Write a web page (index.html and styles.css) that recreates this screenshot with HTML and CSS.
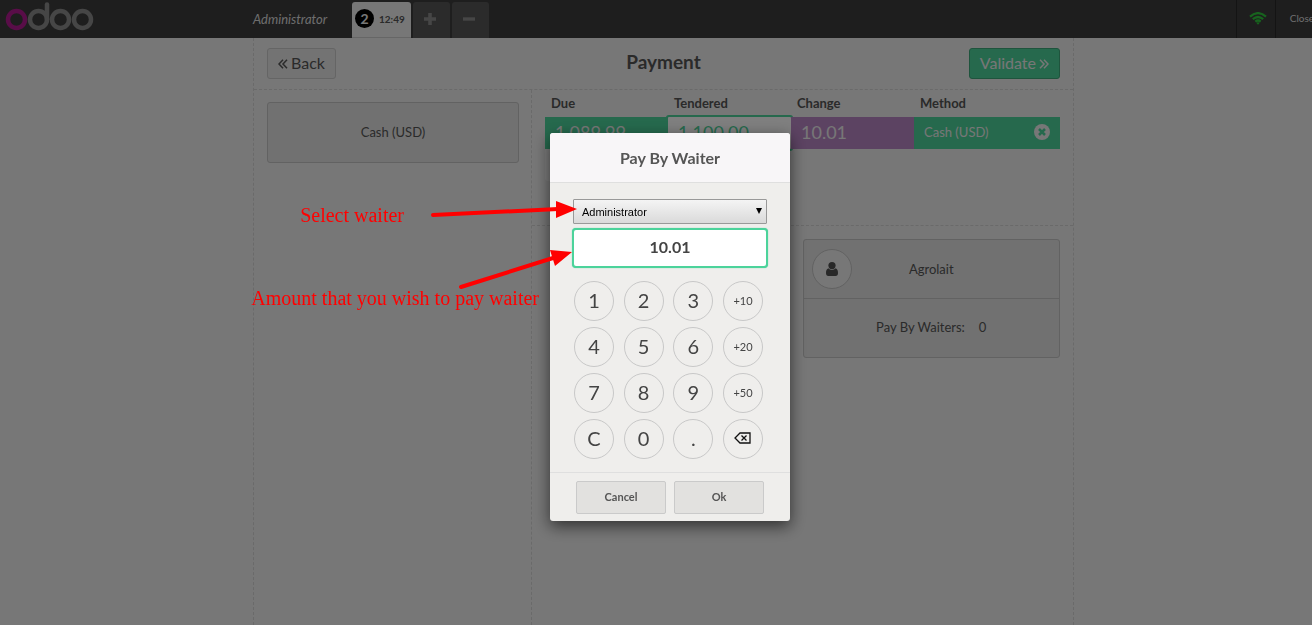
FILE: index.html
```
<!DOCTYPE html>
<html lang="en">
<head>
  <meta charset="UTF-8">
  <meta name="viewport" content="width=device-width, initial-scale=1.0">
  <title>Point of Sale</title>
  <link rel="stylesheet" href="styles.css">
</head>
<body>
  <div class="pos">
    <header class="topbar">
      <div class="logo">
        <svg width="90" height="32" viewBox="0 0 90 32" role="img" aria-label="odoo">
          <g fill="none" stroke-width="4.5">
            <circle cx="11.5" cy="19.5" r="8.5" stroke="#b31b91"/>
            <g stroke="#8c8c8c">
              <circle cx="33.5" cy="19.5" r="8.5"/>
              <path d="M42 19.5V4.5" stroke-linecap="round"/>
              <circle cx="55.5" cy="19.5" r="8.5"/>
              <circle cx="77.5" cy="19.5" r="8.5"/>
            </g>
          </g>
        </svg>
      </div>
      <div class="topbar-main">
        <span class="username">Administrator</span>
        <div class="orders">
          <button class="order selected"><span class="order-number">2</span>12:49</button>
          <button class="order square" aria-label="New order">
            <svg width="12" height="12" viewBox="0 0 12 12"><path d="M6 0v12M0 6h12" stroke="#8c8c8c" stroke-width="3.6"/></svg>
          </button>
          <button class="order square" aria-label="Delete order">
            <svg width="12" height="12" viewBox="0 0 12 12"><path d="M0 6h12" stroke="#8c8c8c" stroke-width="3.4"/></svg>
          </button>
        </div>
      </div>
      <div class="status">
        <span class="wifi">
          <svg width="18" height="13" viewBox="0 0 18 13" fill="none" stroke="#2fc63c" stroke-width="2.2">
            <path d="M1 4.6Q9-2.4 17 4.6M3.8 7.2Q9 2.8 14.2 7.2M6.3 9.6Q9 7.4 11.7 9.6"/>
            <path d="M7.2 10.8L9 12.8 10.8 10.8Q9 9.6 7.2 10.8z" fill="#2fc63c" stroke="none"/>
          </svg>
        </span>
        <button class="close">Close</button>
      </div>
    </header>

    <main class="screen">
      <div class="screen-top">
        <button class="nav">
          <svg width="10" height="10" viewBox="0 0 10 10"><path d="M5 .8L1 5l4 4.2M9 .8L5 5l4 4.2"/></svg>
          Back
        </button>
        <h1>Payment</h1>
        <button class="nav validate">
          Validate
          <svg width="10" height="10" viewBox="0 0 10 10"><path d="M1 .8L5 5 1 9.2M5 .8L9 5 5 9.2"/></svg>
        </button>
      </div>
      <div class="screen-body">
        <section class="methods">
          <button class="box method">Cash (USD)</button>
        </section>
        <section class="details">
          <div class="lines">
            <table>
              <thead>
                <tr><th>Due</th><th>Tendered</th><th>Change</th><th class="col-method">Method</th></tr>
              </thead>
              <tbody>
                <tr>
                  <td>1,089.99</td>
                  <td class="edit">1,100.00</td>
                  <td class="change">10.01</td>
                  <td class="col-method">
                    <div class="method-cell">
                      Cash (USD)
                      <button class="remove" aria-label="Remove line">
                        <svg width="16" height="16" viewBox="0 0 16 16"><circle cx="8" cy="8" r="8"/><path d="M5 5l6 6M11 5l-6 6"/></svg>
                      </button>
                    </div>
                  </td>
                </tr>
              </tbody>
            </table>
            <div class="next-line"></div>
          </div>
          <div class="extras">
            <div class="box customer">
              <div class="customer-row">
                <span class="avatar">
                  <svg width="12" height="14" viewBox="0 0 12 14" fill="#505050"><circle cx="6" cy="3.6" r="3.6"/><path d="M2.4 6.2C.6 6.8 0 8.6 0 11c0 2 .8 3 2.4 3h7.2C11.2 14 12 13 12 11c0-2.4-.6-4.2-2.4-4.8C8.6 7.3 7.4 7.9 6 7.9S3.4 7.3 2.4 6.2z"/></svg>
                </span>
                Agrolait
              </div>
              <div class="customer-row">Pay By Waiters: <span class="count">0</span></div>
            </div>
          </div>
        </section>
      </div>
    </main>
  </div>

  <div class="overlay">
    <div class="popup" role="dialog" aria-labelledby="popup-title">
      <h2 id="popup-title">Pay By Waiter</h2>
      <div class="popup-body">
        <div class="select-wrap">
          <select aria-label="Waiter">
            <option>Administrator</option>
          </select>
        </div>
        <input class="amount" type="text" value="10.01" aria-label="Amount">
        <div class="numpad">
          <button>1</button>
          <button>2</button>
          <button>3</button>
          <button class="add">+10</button>
          <button>4</button>
          <button>5</button>
          <button>6</button>
          <button class="add">+20</button>
          <button>7</button>
          <button>8</button>
          <button>9</button>
          <button class="add">+50</button>
          <button>C</button>
          <button>0</button>
          <button>.</button>
          <button aria-label="Backspace">
            <svg width="17" height="12" viewBox="0 0 17 12" fill="none" stroke="#111"><path d="M6 1h10v10H6L1 6z" stroke-width="1.3"/><path d="M7.5 3.5l5 5M12.5 3.5l-5 5" stroke-width="1.3"/></svg>
          </button>
        </div>
      </div>
      <div class="popup-footer">
        <button>Cancel</button>
        <button>Ok</button>
      </div>

      <span class="note note-waiter">Select waiter</span>
      <span class="note note-amount">Amount that you wish to pay waiter</span>
      <svg class="arrows" width="150" height="90" viewBox="0 0 150 90" fill="#f00" stroke="#f00">
        <path d="M3 15L128 9M31 87L123 58" stroke-width="4" stroke-linecap="round"/>
        <path d="M126 1L147 9 126 18zM120 50L142 52 125 66z" stroke="none"/>
      </svg>
    </div>
  </div>
</body>
</html>
```
FILE: styles.css
```
* {
  box-sizing: border-box;
}
body {
  margin: 0;
  height: 100vh;
  overflow: hidden;
  font-family: Lato, sans-serif;
  font-size: 13px;
  color: #555;
  background: #eee;
}
button {
  font: inherit;
  color: inherit;
  cursor: pointer;
}
/* a little wider than the window, the right edge is cut off */
.pos {
  display: flex;
  flex-direction: column;
  width: calc(100% + 15px);
  height: 100vh;
}

/* top bar */
.topbar {
  display: flex;
  justify-content: center;
  position: relative;
  height: 38px;
  background: #3c3c3c;
}
.logo {
  position: absolute;
  left: 5px;
  top: 0;
}
.topbar-main {
  display: flex;
  align-items: center;
  width: 821px;
}
.username {
  width: 99px;
  font-size: 13px;
  font-style: italic;
  color: #ddd;
}
.orders {
  display: flex;
  align-self: flex-end;
  gap: 2px;
}
.order {
  display: flex;
  align-items: center;
  gap: 5px;
  height: 36px;
  padding: 0 6px 2px 3px;
  border: none;
  border-radius: 3px 3px 0 0;
  font-size: 10px;
  font-weight: bold;
}
.order.selected {
  background: #eee;
  border-bottom: 1px solid #ccc;
}
.order-number {
  width: 19px;
  height: 19px;
  border-radius: 10px;
  background: #000;
  color: #eee;
  font-size: 14px;
  line-height: 19px;
}
.order.square {
  justify-content: center;
  width: 37px;
  background: #575757;
}
.status {
  display: flex;
  position: absolute;
  right: 0;
  top: 0;
  height: 38px;
}
.wifi {
  display: flex;
  align-items: center;
  justify-content: center;
  width: 40px;
  padding: 0 0 2px 4px;
  border: 1px solid #292929;
  border-width: 0 1px;
}
.close {
  width: 51px;
  padding: 0 0 2px 1px;
  border: none;
  background: none;
  color: #ddd;
  font-size: 10px;
}

/* payment screen */
.screen {
  display: flex;
  flex: 1;
  flex-direction: column;
  width: 821px;
  margin: 0 auto;
  border: 1px dashed #d4d4d4;
  border-width: 0 1px;
}
.screen-top {
  display: flex;
  align-items: center;
  justify-content: space-between;
  position: relative;
  height: 52px;
  padding: 0 13px;
  border-bottom: 1px dashed #d4d4d4;
}
.screen-top h1 {
  position: absolute;
  left: 0;
  right: 0;
  margin: 0;
  padding-bottom: 4px;
  font-size: 19px;
  line-height: 24px;
  text-align: center;
  pointer-events: none;
}
.nav {
  display: flex;
  align-items: center;
  gap: 3px;
  height: 31px;
  padding: 0 10px 2px;
  border: 1px solid #cacaca;
  border-radius: 3px;
  background: #e6e6e6;
  font-size: 16px;
}
.nav svg {
  margin-top: 2px;
  fill: none;
  stroke: currentColor;
  stroke-width: 1.5px;
}
.nav.validate {
  border-color: #3fa87b;
  background: #4cd39b;
  color: #eee;
}
.screen-body {
  display: flex;
  flex: 1;
}
.methods {
  width: 278px;
  padding: 12px 12px 12px 13px;
  border-right: 1px dashed #d4d4d4;
}
.details {
  flex: 1;
}
.box {
  border: 1px solid #c4c4c4;
  border-radius: 3px;
  background: #e2e2e2;
}
.method {
  width: 100%;
  height: 61px;
  padding-bottom: 3px;
}
.lines {
  height: 136px;
  padding: 0 13px;
  border-bottom: 1px dashed #d4d4d4;
}
.lines table {
  width: 100%;
  border-collapse: collapse;
  table-layout: fixed;
}
.lines th {
  height: 27px;
  padding: 0 6px 2px;
  text-align: left;
}
.lines td {
  height: 32px;
  padding: 0 10px 2px;
  background: #4cd39b;
  color: #eee;
  font-size: 18px;
}
.lines td.edit {
  border-radius: 1px;
  background: #fff;
  box-shadow: 0 0 0 2px #4cd39b;
  color: #4cd39b;
}
.lines td.change {
  background: #b986c5;
}
.lines .col-method {
  width: 146px;
  font-size: 13px;
}
.method-cell {
  display: flex;
  align-items: center;
  justify-content: space-between;
}
.remove {
  display: flex;
  padding: 0;
  border: none;
  background: none;
}
.remove circle {
  fill: #eee;
}
.remove path {
  stroke: #4cd39b;
  stroke-width: 2.5px;
}
.next-line {
  width: 45%;
  height: 32px;
  border-radius: 0 0 3px 3px;
  background: #fafafa;
}
.extras {
  display: flex;
  justify-content: flex-end;
  padding: 13px;
}
.customer {
  width: 50%;
}
.customer-row {
  display: flex;
  align-items: center;
  justify-content: center;
  position: relative;
  height: 58px;
}
.customer-row + .customer-row {
  height: 59px;
  padding-bottom: 2px;
  border-top: 1px solid #c4c4c4;
}
.avatar {
  display: flex;
  align-items: center;
  justify-content: center;
  position: absolute;
  left: 8px;
  width: 40px;
  height: 40px;
  border: 1px solid #c4c4c4;
  border-radius: 50%;
  background: #eee;
}
.count {
  margin-left: 14px;
}

/* popup */
.overlay {
  display: flex;
  align-items: center;
  justify-content: center;
  position: fixed;
  inset: 0;
  padding: 29px 0 0 28px;
  background: rgba(0, 0, 0, 0.5);
}
.popup {
  position: relative;
  width: 240px;
  border-radius: 3px;
  background: #efeeec;
  box-shadow: 0 5px 16px rgba(0, 0, 0, 0.6);
}
.popup h2 {
  margin: 0;
  border-bottom: 1px solid #dfdfdf;
  border-radius: 3px 3px 0 0;
  background: #f8f6f8;
  font-size: 16px;
  line-height: 49px;
  text-align: center;
}
.popup-body {
  padding: 16px 22px 13px;
}
.select-wrap {
  position: relative;
  padding: 0 1px;
}
.select-wrap::after {
  content: "";
  position: absolute;
  right: 6px;
  top: 9px;
  border: 3px solid transparent;
  border-top: 6px solid #000;
  border-bottom: none;
}
.select-wrap select {
  display: block;
  appearance: none;
  width: 100%;
  height: 25px;
  padding: 0 8px;
  border: 1px solid #999;
  border-radius: 1px;
  background: linear-gradient(#f4f4f4, #dadada);
  color: #000;
  font: 11px "Liberation Sans", sans-serif;
}
.amount {
  display: block;
  width: 100%;
  height: 40px;
  margin: 4px 0 13px;
  padding: 0 0 3px;
  border: 2px solid #4cd39b;
  border-radius: 4px;
  outline: none;
  background: #fff;
  box-shadow: 0 0 1px #4cd39b;
  color: #444;
  font: bold 16px Lato, sans-serif;
  text-align: center;
}
.numpad {
  display: grid;
  grid-template-columns: repeat(4, 40px);
  justify-content: space-between;
  row-gap: 6px;
  padding: 0 5px 0 2px;
}
.numpad button {
  display: flex;
  align-items: center;
  justify-content: center;
  height: 40px;
  padding: 0 0 2px;
  border: 1px solid #c8c8c8;
  border-radius: 50%;
  background: none;
  color: #444;
  font-size: 20px;
}
.numpad .add {
  font-size: 11px;
}
.popup-footer {
  display: flex;
  justify-content: center;
  gap: 8px;
  padding: 8px 0 7px;
  border-top: 1px solid #dfdfdf;
}
.popup-footer button {
  width: 90px;
  height: 33px;
  padding: 0 0 2px;
  border: 1px solid #cacaca;
  border-radius: 2px;
  background: #e2e1df;
  font-size: 11px;
  font-weight: bold;
}

/* notes beside the popup */
.note {
  position: absolute;
  color: #f00;
  font: 20px/24px "Liberation Serif", serif;
  white-space: nowrap;
}
.note-waiter {
  right: 386px;
  top: 70px;
}
.note-amount {
  right: 251px;
  top: 153px;
}
.arrows {
  position: absolute;
  left: -120px;
  top: 67px;
  pointer-events: none;
}
```
